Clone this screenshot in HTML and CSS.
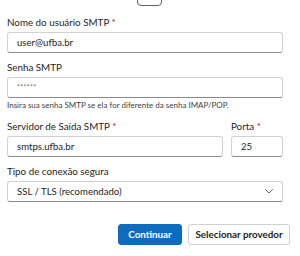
FILE: index.html
```html
<!DOCTYPE html>
<html lang="pt-BR">
<head>
<meta charset="utf-8">
<link rel="stylesheet" href="styles.css">
</head>
<body>
<div class="top-tab"></div>
<form class="form">
  <div class="field">
    <label class="label">Nome do usuário SMTP <span class="req">*</span></label>
    <div class="input">user@ufba.br</div>
  </div>
  <div class="field">
    <label class="label">Senha SMTP</label>
    <div class="input pw">******</div>
    <div class="hint">Insira sua senha SMTP se ela for diferente da senha IMAP/POP.</div>
  </div>
  <div class="row">
    <div class="field grow">
      <label class="label">Servidor de Saída SMTP <span class="req">*</span></label>
      <div class="input">smtps.ufba.br</div>
    </div>
    <div class="field port">
      <label class="label">Porta <span class="req">*</span></label>
      <div class="input">25</div>
    </div>
  </div>
  <div class="field">
    <label class="label">Tipo de conexão segura</label>
    <div class="input select">
      <span>SSL / TLS (recomendado)</span>
      <svg class="chev" width="8" height="5" viewBox="0 0 8 5"><path d="M0.5 0.5 L4 4 L7.5 0.5" fill="none" stroke="#616161" stroke-width="1" stroke-linecap="round" stroke-linejoin="round"/></svg>
    </div>
  </div>
  <div class="actions">
    <button type="button" class="btn primary">Continuar</button>
    <button type="button" class="btn secondary">Selecionar provedor</button>
  </div>
</form>
</body>
</html>
```
FILE: styles.css
```css
* { box-sizing: border-box; }
html, body { margin: 0; padding: 0; background: #fff; }
body {
  font-family: "Lato", "Open Sans", sans-serif;
  color: #242424;
  width: 300px;
  height: 256px;
  overflow: hidden;
  position: relative;
}
.top-tab {
  position: absolute;
  left: 137px;
  top: -6px;
  width: 25px;
  height: 12px;
  border: 1px solid #616161;
  border-radius: 4px;
}
.form {
  padding: 14px 17px 0 7px;
  display: flex;
  flex-direction: column;
  gap: 6px;
}
.field { display: flex; flex-direction: column; }
.label {
  font-size: 9.8px;
  line-height: 16px;
  margin-bottom: 2px;
  color: #242424;
}
.req { color: #c50f1f; }
.input {
  height: 21px;
  border: 1px solid #d1d1d1;
  border-bottom-color: #8a8a8a;
  border-radius: 3px;
  padding: 0 9px;
  font-size: 9.6px;
  line-height: 19px;
  color: #242424;
  display: flex;
  align-items: center;
}
.pw { font-size: 7px; color: #707070; letter-spacing: 0.3px; }
.hint {
  font-size: 8px;
  line-height: 14px;
  color: #424242;
}
.row { display: flex; gap: 8px; }
.grow { flex: 1; }
.port { width: 52px; }
.select { justify-content: space-between; }
.chev { margin-right: 0; }
.actions {
  margin-top: 16px;
  margin-right: -7px;
  display: flex;
  justify-content: flex-end;
  gap: 6px;
}
.btn {
  height: 21px;
  border-radius: 3px;
  font-family: inherit;
  font-size: 9.8px;
  font-weight: 700;
  line-height: 19px;
  padding: 0;
  white-space: nowrap;
  cursor: pointer;
}
.primary { background: #0f6cbd; color: #fff; border: 1px solid #0f6cbd; width: 64px; }
.secondary { background: #fff; color: #242424; border: 1px solid #d1d1d1; width: 102px; }
```
